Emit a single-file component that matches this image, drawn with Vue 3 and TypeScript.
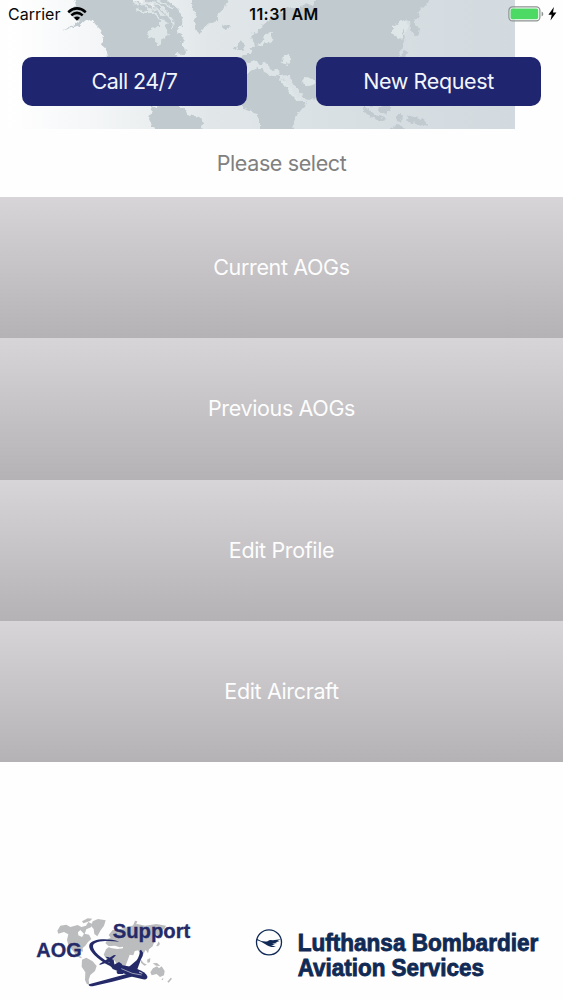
<template>
  <div class="screen">
    <header class="header">
      <!-- world map backdrop -->
      <svg class="header-map" viewBox="0 0 507 129" aria-hidden="true">
        <defs>
          <linearGradient id="seaGradient" x1="0" y1="0" x2="1" y2="0">
            <stop offset="0" stop-color="#ffffff" />
            <stop offset="0.17" stop-color="#f4f6f7" />
            <stop offset="0.4" stop-color="#e1e7e9" />
            <stop offset="0.65" stop-color="#d9e0e4" />
            <stop offset="1" stop-color="#d2dadf" />
          </linearGradient>
          <!-- ragged coastline -->
          <filter id="coast" x="0" y="0" width="100%" height="100%">
            <feTurbulence type="fractalNoise" baseFrequency="0.22" numOctaves="2" seed="4" />
            <feDisplacementMap in="SourceGraphic" scale="6" xChannelSelector="R" yChannelSelector="G" />
          </filter>
        </defs>
        <rect width="507" height="129" fill="url(#seaGradient)" />
        <g transform="translate(-8 0)" filter="url(#coast)">
          <g fill="#c0cacf">
            <path
              d="M73 -6H130L134 3L139 1L142 5L148 3L152 8L158 5L163 11L166 8L172 14L170 18L175 17L178 22L174 25L179 29L176 33L181 35L184 40L181 43L186 48L177 51L174 55L179 57V106H158L142 91L133 78L121 70L107 58L106 50L102 44L104 36L101 30L96 25L93 21L86 20L80 25L62 31L74 25L79 21L72 16L69 9L76 7Z"
            />
            <path d="M176 50L184 46L187 53L180 55Z" />
            <path d="M137 -6L162 -6L170 2L178 9L183 18L181 27L174 27L170 18L162 10L152 4Z" />
            <path d="M191 -6H231L226 4L224 10L218 15L218 21L209 24L203 29L199 35L196 31L194 22L197 16L193 8Z" />
            <path d="M221 26L225 24L231 25L230 28L225 30Z" />
            <path d="M237 44L240 40L243 44L245 49L239 51ZM234 46L237 46L236 50L233 49Z" />
            <path
              d="M243 62L242 56L251 53L250 49L255 46L253 41L252 34L262 27L272 18L284 10L291 6L299 10L306 3L313 6L318 -6H430L427 3L421 9L418 13L419 18L414 20L419 29L417 36L411 31L410 21L405 19L399 22L392 27L392 34L398 37L403 42L401 51L398 57L396 75L390 84L388 94L383 98L376 92L371 107L365 96L355 86L344 81L336 78L329 86L320 93L315 99L306 100L295 86L289 75L279 76L278 70L272 71L268 64L264 62L259 64L254 60L250 63Z"
            />
            <path
              d="M244 74L258 68L263 68L264 73L276 76L283 78L291 94L297 102L306 102L302 109L295 117L292 134H260L260 121L256 114L244 109L238 96L238 84Z"
            />
            <path d="M153 107L163 104L178 105L186 110L187 115L199 117L204 120L200 134H156L149 119Z" />
            <path d="M405 50L409 52L406 55L403 59L399 58L401 54Z" />
            <path d="M360 104L368 109L377 116L387 119L380 121L368 115Z" />
            <path d="M379 107L388 105L391 109L386 114L378 112Z" />
            <path d="M396 116L402 113L403 118L399 122Z" />
            <path d="M408 117L415 116L423 120L428 126L418 124L405 120Z" />
            <path d="M391 129L397 125L402 126L406 134H391Z" />
          </g>
          <!-- lakes, bays and inner seas -->
          <g fill="#dfe6e8">
            <path d="M147 33L151 29L159 26L159 23L163 20L168 23L164 27L167 31L168 35L162 38L160 46L156 46L155 40L149 37Z" />
            <path d="M257 45L262 42L265 36L270 32L273 32L270 37L274 40L268 43L260 46Z" />
            <path d="M283 57L288 55L292 60L289 64L281 62Z" />
            <path d="M281 77L288 84L297 97L301 98L298 101L291 95L280 80Z" />
            <path d="M302 82L305 78L314 79L316 84L308 86Z" />
            <path d="M392 34L392 27L399 22L406 20L409 25L403 38L398 37Z" />
          </g>
          <path d="M403 29L404 38L402 44" fill="none" stroke="#c0cacf" stroke-width="1.5" />
          <g fill="none" stroke="#dfe6e8" stroke-width="2">
            <path d="M133 2L139 5L144 4L150 10L157 9L163 15L169 14" />
            <path d="M142 0L150 3L158 4L163 9L172 20L173 28" />
            <path d="M136 9L146 12L152 12L158 18L163 20" />
            <path d="M152 -2L163 3L174 9" />
          </g>
        </g>
      </svg>

      <div class="status-bar">
        <div class="carrier">
          <span>Carrier</span>
          <svg class="wifi" viewBox="0 0 20 14">
            <g fill="none" stroke="#000" stroke-width="2.5">
              <path d="M1.2 5.2Q10 -2.4 18.8 5.2" />
              <path d="M4.3 8.4Q10 3.3 15.7 8.4" />
            </g>
            <path d="M6.9 10.7Q10 8.3 13.1 10.7L10 13.8Z" />
          </svg>
        </div>
        <div class="clock">11:31 AM</div>
        <div class="power">
          <svg class="battery" viewBox="0 0 36 16">
            <rect x="0.9" y="0.9" width="31" height="14" rx="3.6" fill="#fff" fill-opacity="0.5" stroke="#8c9391" stroke-width="1.2" />
            <rect x="2.6" y="2.6" width="27.6" height="10.6" rx="1.8" fill="#4cd964" />
            <path d="M33.6 5.4Q35.3 6.2 35.3 7.9Q35.3 9.6 33.6 10.4Z" fill="#8c9391" />
          </svg>
          <svg class="bolt" viewBox="0 0 9 14">
            <path d="M5.9 0L0.4 7.8H3.7L2.5 13.6L8.4 5.6H5Z" />
          </svg>
        </div>
      </div>

      <div class="actions">
        <button class="action call">Call 24/7</button>
        <button class="action">New Request</button>
      </div>
    </header>

    <p class="prompt">Please select</p>

    <nav class="menu">
      <button v-for="item in menuItems" :key="item" class="menu-item">{{ item }}</button>
    </nav>

    <footer class="footer">
      <svg class="aog-logo" viewBox="0 0 570 285">
        <g fill="#bbbcbe">
          <path
            d="M112 77L121 62L139 59L151 66L173 60L184 66L198 62L205 51L217 57L213 67L199 73L194 86L207 89L214 102L204 111L196 122L188 129L189 140L178 137L174 151L185 156L184 160L170 154L160 139L146 124L141 105L145 88L132 81L115 86Z"
          />
          <path d="M186 49L203 40L217 41L210 48L190 55Z" />
          <path d="M218 49L234 42L257 46L252 62L242 76L232 94L223 87L221 72L213 63Z" />
          <path d="M186 164L199 158L218 169L230 183L225 198L211 210L206 225L208 240L200 236L195 225L196 202L185 185Z" />
          <path
            d="M256 114L265 101L272 98L266 90L278 75L290 75L326 65L352 57L376 62L409 57L438 62L433 72L420 77L415 94L407 86L399 94L404 108L398 124L387 133L384 145L377 134L367 154L354 136L344 139L340 151L329 149L323 166L313 191L300 199L292 180L283 166L261 164L251 149L258 133L268 125Z"
          />
          <path d="M391 202L399 190L411 184L417 190L425 184L434 198L432 211L420 216L410 207L395 211Z" />
          <path d="M442 230L452 218L456 221L446 233Z" />
          <path d="M363 164L371 174L381 179L373 182L363 173Z" />
          <path d="M381 164L391 159L390 171L383 174Z" />
          <path d="M398 175L411 174L421 183L408 182Z" />
          <path d="M409 123L416 109L420 117L414 124Z" />
          <path d="M339 62L345 47L352 49L346 64Z" />
          <path d="M424 223L430 219L429 226Z" />
        </g>
        <g fill="#fff">
          <path d="M174 82L181 75L192 86L186 96L175 91Z" />
          <path d="M262 124L285 122L299 127L309 125L309 130L292 132L272 129Z" />
        </g>
        <!-- flight path swoosh -->
        <path
          d="M298 110C262 98 213 101 208 120C204 138 237 168 278 187L282 181C244 160 217 138 219 122C222 108 258 106 298 110Z"
          fill="#242a68"
        />
        <path d="M331 204L207 238Q203 244 218 244L277 230L346 212Z" fill="#242a68" />
        <!-- aircraft -->
        <g fill="#242a68">
          <path d="M272 183Q287 178 305 180Q329 184 350 191Q377 201 382 214Q384 225 369 223L340 216L300 201L278 192Z" />
          <path d="M322 190L350 166Q361 148 359 137L363 134L369 143Q370 152 363 163L350 198Z" />
          <path d="M271 184L265 163L256 155L265 156L281 165L284 182Z" />
          <path d="M237 178L282 150L288 151L268 170L241 179Z" />
          <path d="M276 182L297 171L307 178L302 185L281 190Z" />
          <path d="M289 200Q299 191 313 199L309 207L293 207Z" />
        </g>
        <path d="M304 191L337 205L365 210" fill="none" stroke="#fff" stroke-width="1.6" />
        <path d="M357 201L367 205" stroke="#c5c7d8" stroke-width="3" />
        <text class="aog-word" x="49" y="157" textLength="136" lengthAdjust="spacingAndGlyphs">AOG</text>
        <text class="aog-word" x="278" y="99" textLength="233" lengthAdjust="spacingAndGlyphs">Support</text>
      </svg>

      <svg class="lufthansa-logo" viewBox="0 0 969 225">
        <circle cx="87" cy="82" r="37.5" fill="none" stroke="#102a55" stroke-width="4" />
        <path
          d="M50 71Q67 82 83 79Q89 73 98 76L122 73L112 78L119 79L106 82L112 84L97 86L105 90L93 90L108 96Q88 98 75 87Q64 79 50 75Z"
          fill="#102a55"
        />
        <text class="brand-word" x="173" y="107" textLength="722" lengthAdjust="spacingAndGlyphs">Lufthansa Bombardier</text>
        <text class="brand-word" x="173" y="184" textLength="559" lengthAdjust="spacingAndGlyphs">Aviation Services</text>
      </svg>
    </footer>
  </div>
</template>

<script setup lang="ts">
const menuItems: string[] = ["Current AOGs", "Previous AOGs", "Edit Profile", "Edit Aircraft"];
</script>

<style>
body {
  margin: 0;
  background: #fefefe;
}
</style>

<style scoped>
.screen {
  display: flex;
  flex-direction: column;
  width: 563px;
  height: 1000px;
  overflow: hidden;
  background: #fefefe;
  font-family: Inter, "Liberation Sans", sans-serif;
}

button {
  padding: 0 0 1px;
  border: 0;
  font-family: inherit;
}

/* header */
.header {
  position: relative;
  height: 129px;
}

.header-map {
  position: absolute;
  top: 0;
  left: 8px;
  width: 507px;
  height: 129px;
}

.status-bar {
  position: relative;
  display: grid;
  grid-template-columns: 1fr auto 1fr;
  align-items: center;
  height: 28px;
  padding: 0 6px 0 8px;
  color: #080808;
  font-size: 16px;
}

.carrier {
  display: flex;
  align-items: center;
  gap: 7px;
}

.wifi {
  width: 20px;
  height: 14px;
}

.clock {
  padding-left: 3px;
  font-weight: 600;
  font-size: 16px;
  letter-spacing: 0.45px;
}

.power {
  display: flex;
  align-items: center;
  justify-content: flex-end;
  gap: 4px;
}

.battery {
  width: 36px;
  height: 16px;
}

.bolt {
  width: 9px;
  height: 14px;
}

.actions {
  position: relative;
  display: flex;
  justify-content: space-between;
  padding: 29px 22px 0;
}

.action {
  width: 225px;
  height: 49px;
  border-radius: 10px;
  background: #1f256f;
  color: #f2f5fc;
  font-size: 21.5px;
  letter-spacing: -0.38px;
}

.action.call {
  letter-spacing: -0.55px;
}

/* menu */
.prompt {
  height: 68px;
  margin: 0;
  line-height: 68px;
  text-align: center;
  color: #808080;
  font-size: 21.5px;
  letter-spacing: -0.38px;
}

.menu {
  display: grid;
  grid-template-rows: repeat(4, 1fr);
  height: 565px;
}

.menu-item {
  background: linear-gradient(#d7d5d8, #b4b2b5);
  color: #fdfdfd;
  font-size: 21.5px;
  letter-spacing: -0.36px;
}

/* logos */
.footer {
  display: flex;
  align-items: flex-start;
  gap: 30px;
  padding: 143px 0 0 20px;
}

.aog-logo {
  flex: none;
  width: 190px;
  height: 95px;
}

.lufthansa-logo {
  flex: none;
  width: 323px;
  height: 75px;
  margin-top: 10px;
}

.aog-word {
  fill: #242a68;
  font-family: "Liberation Sans", sans-serif;
  font-size: 61px;
  font-weight: 700;
  stroke: #242a68;
  stroke-width: 1;
}

.brand-word {
  fill: #102a55;
  font-family: "Liberation Sans", sans-serif;
  font-size: 69px;
  font-weight: 700;
  stroke: #102a55;
  stroke-width: 2.5;
}
</style>
